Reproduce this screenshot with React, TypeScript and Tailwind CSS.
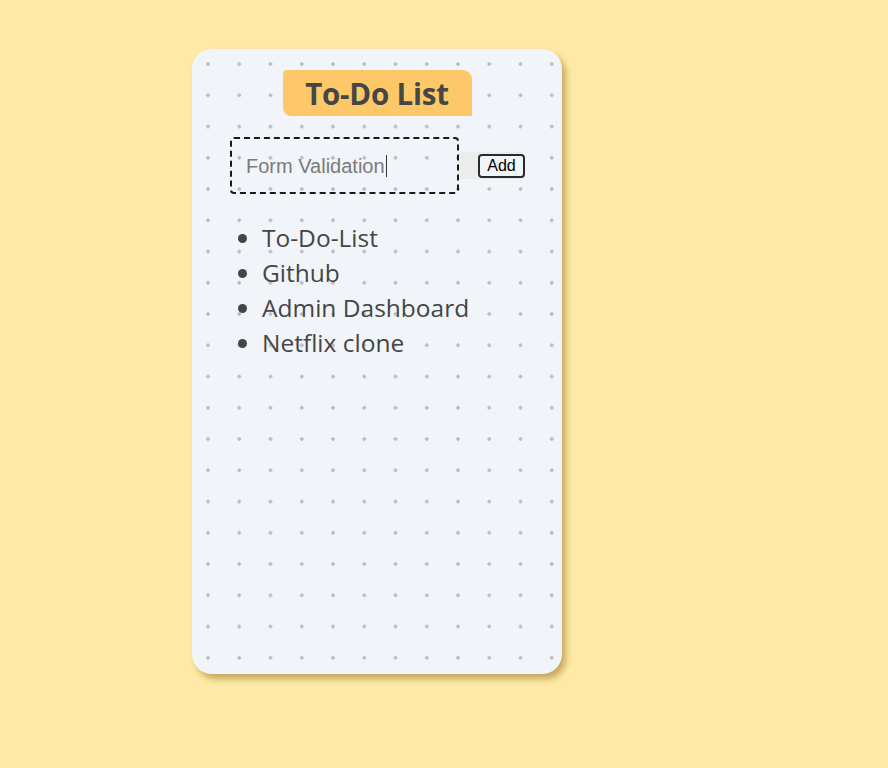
import React from "react";

export default function App() {
  const dots = {
    backgroundImage:
      "radial-gradient(circle, #bdbdbd 1.5px, transparent 2px)",
    backgroundSize: "31.26px 31.26px",
    backgroundPosition: "0.4px -0.6px",
  } as React.CSSProperties;
  return (
    <div className="min-h-[768px] w-full bg-[#ffe9a6] pl-[192px] pt-[49px]">
      <div
        className="relative flex h-[625px] w-[370px] flex-col rounded-[20px] bg-[#f1f5f9] shadow-[4px_5px_6px_rgba(150,120,40,0.55)]"
        style={dots}
      >
        <div className="mt-[21px] flex justify-center">
          <div className="flex h-[46px] w-[189px] items-center justify-center rounded-[4px_9px_1px_8px] bg-[#fec868] pt-[2px]">
            <h1 className="font-['Open_Sans',sans-serif] text-[29.5px] font-bold leading-none tracking-[-0.2px] text-[#464646]">
              To-Do List
            </h1>
          </div>
        </div>
        <div className="mt-[21px] flex items-center pl-[38px]">
          <div className="flex h-[57px] w-[229px] items-center rounded-[4px] border-2 border-dashed border-[#1a1a1a] pl-[14px]">
            <span className="font-['Liberation_Sans',sans-serif] text-[20px] text-[#7a7a7a]">
              Form Validation
            </span>
            <span className="ml-[1px] h-[22px] w-[1px] bg-[#333]" />
          </div>
          <div className="flex h-[27px] w-[64px] items-center bg-[#ececec] pl-[19px]">
            <button className="flex h-[24px] w-[47px] shrink-0 items-center justify-center rounded-[4px] border-2 border-[#2a2a2a] bg-[#f1f5f9] font-['Liberation_Sans',sans-serif] text-[16px] leading-none text-black">
              Add
            </button>
          </div>
        </div>
        <ul className="mt-[26px] list-disc pl-[70px] font-['Open_Sans',sans-serif] text-[24.5px] leading-[35px] text-[#454545] marker:text-[#454545]">
          <li>To-Do-List</li>
          <li>Github</li>
          <li>Admin Dashboard</li>
          <li>Netflix clone</li>
        </ul>
      </div>
    </div>
  );
}
